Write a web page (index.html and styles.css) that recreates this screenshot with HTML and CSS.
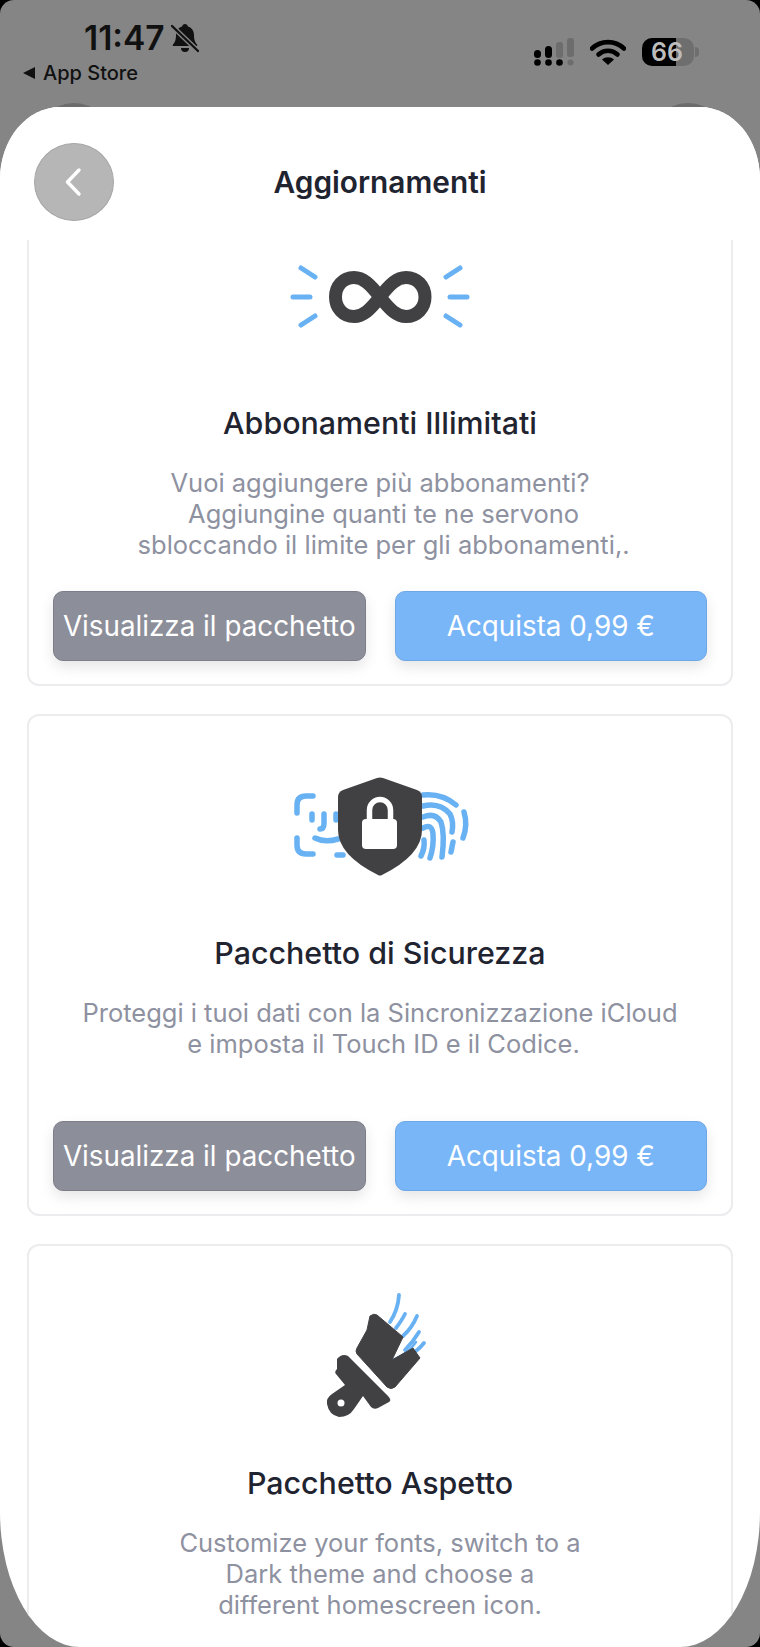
FILE: index.html
```html
<!DOCTYPE html>
<html lang="it">
<head>
<meta charset="utf-8">
<title>Aggiornamenti</title>
<link rel="stylesheet" href="styles.css">
</head>
<body>
<div class="screen">
  <div class="bump bump-left"></div>
  <div class="bump bump-right"></div>
  <div class="status">
    <div class="status-left">
      <div class="clock">
        <span class="time">11:47</span>
        <svg class="bell" viewBox="0 0 28 30"><path d="M14 1c1.600 0 2.600 1 2.900 2.400C21 4.800 23 8 23 12c0 5 1.300 7.500 3 9.500.6.800.2 1.500-.8 1.500H2.800c-1 0-1.400-.7-.8-1.500C3.700 19.500 5 17 5 12c0-4 2-7.200 6.100-8.600C11.400 2 12.400 1 14 1z" fill="#111"/><path d="M10 25h8a4 4 0 0 1-8 0z" fill="#111"/><path d="M1 3l26 25" stroke="#858585" stroke-width="5"/><path d="M1 3l26 25" stroke="#111" stroke-width="2.400" stroke-linecap="round"/></svg>
      </div>
      <div class="back-app"><span class="tri"></span>App Store</div>
    </div>
    <div class="status-right">
      <svg class="cell" viewBox="0 0 42 30"><g fill="#000"><circle cx="3.500" cy="25.500" r="3.300"/><circle cx="14.500" cy="25.500" r="3.300"/><circle cx="25.500" cy="25.500" r="3.300"/><rect x="0" y="13" width="7" height="8" rx="3.500"/><rect x="11" y="9" width="7" height="12" rx="3.500"/></g><g fill="#6d6d6d"><circle cx="36.500" cy="25.500" r="3"/><rect x="22" y="5" width="7" height="16" rx="3"/><rect x="33" y="1" width="7" height="19" rx="3"/></g></svg>
      <svg class="wifi" viewBox="0 0 36 28"><path d="M2 10.500C11 2 25 2 34 10.500" fill="none" stroke="#000" stroke-width="4.600" stroke-linecap="round"/><path d="M8.500 16.500C14 11.500 22 11.500 27.500 16.500" fill="none" stroke="#000" stroke-width="4.600" stroke-linecap="round"/><path d="M18 27l-6-5.500c3.500-3 8.500-3 12 0z" fill="#000"/></svg>
      <div class="battery"><span class="battery-fill"></span><span class="battery-num">66</span><span class="battery-nub"></span></div>
    </div>
  </div>

  <div class="sheet">
    <header class="sheet-head">
      <button class="back-btn" aria-label="Indietro"><svg viewBox="0 0 24 32" class="chev"><path d="M17 4L5.500 16 17 28" fill="none" stroke="#fff" stroke-width="3.400" stroke-linecap="round" stroke-linejoin="round"/></svg></button>
      <h1 class="sheet-title">Aggiornamenti</h1>
    </header>
    <div class="list">
      <section class="card first">
        <svg class="icon" viewBox="0 0 220 100">
          <g stroke="#68b1f3" stroke-width="5" stroke-linecap="round" fill="none"><path d="M31 28l14 9M23 57h17M31 85l14-9M190 28l-14 9M197 57h-17M190 85l-14-9"/></g>
          <path d="M110 57C100 44 93 37.500 84 37.500 73 37.500 65.500 46 65.500 57S73 76.500 84 76.500C93 76.500 100 70 110 57S127 37.500 136 37.500C147 37.500 155 46 155 57S147 76.500 136 76.500C127 76.500 120 70 110 57Z" fill="none" stroke="#414042" stroke-width="13"/>
        </svg>
        <h2 class="card-title">Abbonamenti Illimitati</h2>
        <p class="card-desc">Vuoi aggiungere più abbonamenti?<br>&nbsp;Aggiungine quanti te ne servono<br>&nbsp;sbloccando il limite per gli abbonamenti,.</p>
        <div class="actions"><button class="btn btn-gray">Visualizza il pacchetto</button><button class="btn btn-blue">Acquista 0,99 €</button></div>
      </section>

      <section class="card">
        <svg class="icon" viewBox="0 0 220 100">
          <g transform="translate(0 -10)" fill="none" stroke="#68b1f3" stroke-width="5.500" stroke-linecap="round">
            <path d="M43 36h-7q-9 0-9 9v8M27 78v7q0 9 9 9h7M67 95h6M42 54v6M66 54v6M54 54v9q0 6-4 6M45 78q10 5 23 1"/>
            <path d="M153 35q19-2 33 10M194 52q4 13-1 26M153 46q17-4 27 8 4 8 2 18M153 57q12-5 18 5 4 12 1 35M153 68q9-5 10 6 1 12-3 24M154 80q1 8-3 16M183 82l-2 10"/>
          </g>
          <g transform="translate(0 -10)">
            <path d="M107 18q3-1 6 0l34 12q5 2 5 7v33q0 25-40 45-2 1-4 0-40-20-40-45V37q0-5 5-7Z" fill="#414042"/>
            <path d="M99.500 60V50a10.500 10.500 0 0 1 21 0v10" fill="none" stroke="#fff" stroke-width="5.500"/>
            <rect x="92" y="59" width="35" height="30" rx="4" fill="#fff"/>
          </g>
        </svg>
        <h2 class="card-title">Pacchetto di Sicurezza</h2>
        <p class="card-desc">Proteggi i tuoi dati con la Sincronizzazione iCloud<br>&nbsp;e imposta il Touch ID e il Codice.</p>
        <div class="actions"><button class="btn btn-gray">Visualizza il pacchetto</button><button class="btn btn-blue">Acquista 0,99 €</button></div>
      </section>

      <section class="card">
        <svg class="icon" viewBox="-30 20 220 100">
          <g fill="none" stroke="#68b1f3" stroke-width="3.800" stroke-linecap="round"><path d="M99 15q-1 15-9 27M105 34q-3 6-9 14M117 36q-5 12-14 20M119 52q-6 10-14 18M124 63q-4 5-8 8"/></g>
          <path d="M93 80q15-6 23-18" fill="none" stroke="#68b1f3" stroke-width="2.500" stroke-linecap="round"/>
          <path d="M70 36q4-3 7-1l26 22-11 23 21-12 7 10-25 29q-4 3-8 0L57 74q-2-3 0-6l10-18Z" fill="#414042" stroke="#414042" stroke-width="1" stroke-linejoin="round"/>
          <path d="M37 79q5-6 11-3l40 40q4 4 1 6l-11 6q-4 2-7-1l-8-11-9 13q-5 8-15 8-10-2-12-13-1-6 5-10l13-9-9-11q-2-2 1-5Z" fill="#414042"/>
          <circle cx="41" cy="123" r="3.500" fill="#fff"/>
        </svg>
        <h2 class="card-title">Pacchetto Aspetto</h2>
        <p class="card-desc">Customize your fonts, switch to a<br>Dark theme and choose a<br>different homescreen icon.</p>
      </section>
    </div>
  </div>
</div>
</body>
</html>
```

FILE: styles.css
```css
* { box-sizing: border-box; }
html, body { margin: 0; padding: 0; background: #000; }
body { font-family: Inter, "Liberation Sans", sans-serif; }

.screen {
  position: relative;
  width: 760px;
  height: 1647px;
  overflow: hidden;
  background: #858585;
  border-radius: 14px;
  display: flex;
  flex-direction: column;
}

.bump {
  position: absolute;
  top: 103px;
  width: 78px;
  height: 78px;
  border-radius: 50%;
  background: #6c6c6c;
}
.bump-left { left: 35px; }
.bump-right { left: 649px; }

.status {
  flex: 0 0 107px;
  display: flex;
  justify-content: space-between;
  align-items: flex-start;
  padding: 19px 66px 0 23px;
  color: #111;
}
.status-left { display: flex; flex-direction: column; }
.clock { display: flex; align-items: center; gap: 6px; padding-left: 61px; height: 38px; }
.time { font-size: 33.500px; font-weight: 600; line-height: 38px; }
.bell { width: 28px; height: 30px; }
.back-app { display: flex; align-items: center; gap: 8px; font-size: 20px; font-weight: 500; line-height: 24px; margin-top: 4px; }
.tri { width: 0; height: 0; border-style: solid; border-width: 6px 12px 6px 0; border-color: transparent #111 transparent transparent; }

.status-right { display: flex; align-items: center; gap: 14px; padding-top: 18px; }
.cell { width: 42px; height: 30px; }
.wifi { width: 36px; height: 28px; }
.battery {
  position: relative;
  width: 52px;
  height: 28px;
  border-radius: 10px;
  background: #6e6e6e;
  overflow: visible;
  margin-left: 2px;
}
.battery-fill { position: absolute; left: 0; top: 0; bottom: 0; width: 34px; background: #000; border-radius: 10px 0 0 10px; }
.battery-num { position: absolute; left: 8px; top: 0; width: 34px; text-align: center; font-size: 25px; font-weight: 600; line-height: 28px; color: #bdbdbd; }
.battery-nub { position: absolute; right: -5px; top: 9px; width: 4px; height: 10px; background: #6e6e6e; border-radius: 0 4px 4px 0; }

.sheet {
  position: relative;
  flex: 1;
  min-height: 0;
  display: flex;
  flex-direction: column;
  overflow: hidden;
  background: #fff;
  border-radius: 60px 60px 80px 80px / 72px 72px 135px 135px;
}

.sheet-head {
  flex: 0 0 133px;
  display: flex;
  align-items: flex-start;
  justify-content: center;
  position: relative;
  background: #fff;
  z-index: 1;
}
.back-btn {
  position: absolute;
  left: 34px;
  top: 36px;
  width: 80px;
  height: 78px;
  padding: 0;
  border: 1.500px solid #a6a6a6;
  border-radius: 50%;
  background: #b6b6b6;
  display: flex;
  align-items: center;
  justify-content: center;
}
.chev { width: 24px; height: 32px; }
.sheet-title { margin: 57px 0 0; font-size: 29.800px; font-weight: 600; line-height: 36px; color: #1f2430; }

.list {
  flex: 1;
  min-height: 0;
  overflow: hidden;
  padding: 0 27px;
  display: flex;
  flex-direction: column;
  gap: 28px;
}

.card {
  flex: 0 0 auto;
  height: 502px;
  border: 2px solid #ececef;
  border-radius: 12px;
  padding: 54px 24px 0;
  display: flex;
  flex-direction: column;
  align-items: center;
}
.card.first { margin-top: -56px; }

.icon { width: 220px; height: 100px; flex: none; overflow: visible; }
.card-title { margin: 64px 0 0; font-size: 30.400px; font-weight: 500; line-height: 38px; color: #1f2430; }
.card-desc { margin: 25px 0 0; height: 124px; font-size: 25.500px; font-weight: 400; line-height: 31px; color: #8e919f; text-align: center; white-space: nowrap; }

.actions { display: flex; gap: 29px; align-self: stretch; }
.btn {
  flex: 1;
  height: 70px;
  padding: 0;
  border-radius: 10px;
  font-family: inherit;
  font-size: 27.800px;
  font-weight: 400;
  color: #fff;
  box-shadow: 0 6px 14px rgba(0, 0, 0, .1);
}
.btn-gray { background: #8c8e99; border: 1.500px solid #7c7e89; }
.btn-blue { background: #79b6f8; border: 1.500px solid #6ea7e6; }
```
